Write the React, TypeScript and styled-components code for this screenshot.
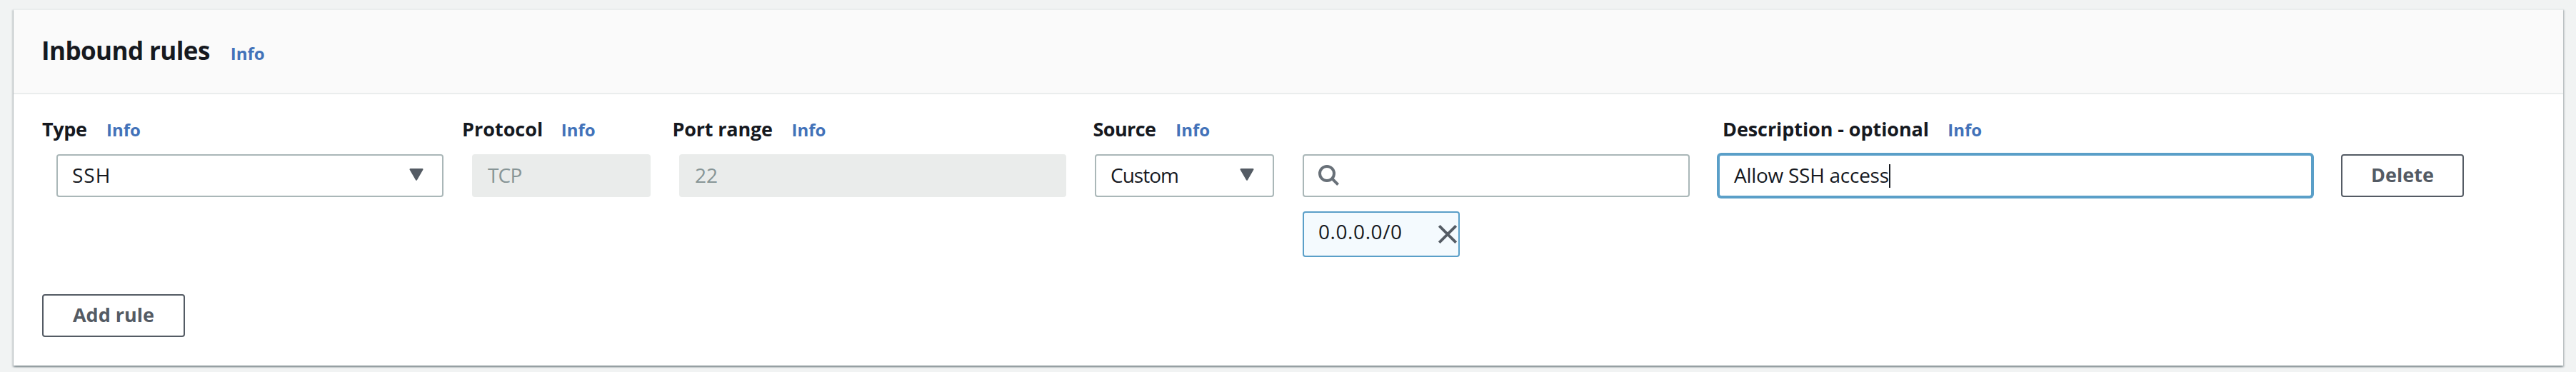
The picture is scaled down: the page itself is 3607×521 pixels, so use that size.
import React from "react";
import styled, { createGlobalStyle } from "styled-components";

const GlobalStyle = createGlobalStyle`
  * { box-sizing: border-box; }
  html, body { margin: 0; background: #f1f3f3; }
  body { font-family: "Open Sans", "Noto Sans", sans-serif; color: #16191f; overflow: hidden; }
`;

const Page = styled.main`
  height: 521px;
  padding: 12px 18px 9px 19px;
`;

const Panel = styled.section`
  height: 500px;
  background: #fff;
  border-top: 2px solid #eaeded;
  box-shadow:
    0 2px 2px rgba(0, 28, 36, 0.3),
    2px 2px 2px rgba(0, 28, 36, 0.15),
    -2px 2px 2px rgba(0, 28, 36, 0.15);
`;

const PanelHeader = styled.header`
  display: flex;
  align-items: baseline;
  gap: 29px;
  height: 118px;
  padding: 29px 39px 0;
  background: #fafafa;
  border-bottom: 2px solid #eaeded;
`;

const Title = styled.h2`
  margin: 0;
  font-size: 35px;
  line-height: 56px;
  font-weight: 700;
  letter-spacing: -0.58px;
`;

const InfoLink = styled.a`
  color: #4272b9;
  font-size: 24px;
  line-height: 36px;
  font-weight: 700;
`;

const PanelBody = styled.div`
  padding: 29px 40px 0;
`;

const LabelRow = styled.div`
  display: flex;
  height: 55px;
`;

const LabelCell = styled.div<{ $width: number; $gap: number }>`
  display: flex;
  flex: none;
  align-items: baseline;
  gap: ${(p) => p.$gap}px;
  width: ${(p) => p.$width}px;
`;

const Label = styled.span<{ $spacing: number }>`
  font-size: 27px;
  line-height: 40px;
  font-weight: 700;
  letter-spacing: ${(p) => p.$spacing}px;
  white-space: nowrap;
`;

const FieldRow = styled.div`
  display: flex;
  align-items: flex-start;
  gap: 40px;
  height: 196px;
  padding-left: 20px;
`;

const Control = styled.div<{ $width: number; $spacing?: number }>`
  display: flex;
  flex: none;
  align-items: center;
  width: ${(p) => p.$width}px;
  height: 60px;
  padding: 0 26px 0 20px;
  border: 2px solid #aab7b8;
  border-radius: 4px;
  background: #fff;
  font-size: 28px;
  line-height: 40px;
  letter-spacing: ${(p) => p.$spacing ?? 0}px;
  white-space: nowrap;
`;

const Select = styled(Control)`
  justify-content: space-between;
  padding-bottom: 3px;
`;

const DisabledInput = styled(Control)`
  padding-bottom: 2px;
  border-color: #eaeceb;
  background: #eaeceb;
  color: #879596;
`;

const FocusedInput = styled(Control)`
  padding-bottom: 2px;
  border-color: #5a9fc8;
  box-shadow: 0 0 0 2px #5a9fc8;
`;

const Caret = styled.span`
  width: 2px;
  height: 33px;
  margin-top: 3px;
  background: #16191f;
`;

const SourceSearch = styled.div`
  display: flex;
  flex-direction: column;
  flex: none;
  gap: 20px;
`;

const Token = styled.div`
  display: flex;
  align-items: center;
  justify-content: space-between;
  width: 220px;
  height: 64px;
  padding: 0 2px 0 20px;
  border: 2px solid #5a9fc8;
  border-radius: 4px;
  background: #f4fafe;
`;

const TokenText = styled.span`
  padding-bottom: 8px;
  font-size: 28px;
  line-height: 40px;
  letter-spacing: 0.58px;
`;

const Button = styled.button<{ $width: number }>`
  flex: none;
  width: ${(p) => p.$width}px;
  height: 60px;
  padding: 0 0 3px;
  border: 2px solid #545b64;
  border-radius: 4px;
  background: #fff;
  color: #545b64;
  font-family: inherit;
  font-size: 27px;
  font-weight: 700;
  line-height: 40px;
`;

const Arrow = () => (
  <svg width="20" height="17" viewBox="0 0 20 17">
    <path d="M1.6 1.2H18.4L10 15.6Z" fill="#545b64" stroke="#545b64" strokeWidth="2.2" strokeLinejoin="round" />
  </svg>
);

const SearchIcon = () => (
  <svg width="30" height="30" viewBox="0 0 30 30">
    <circle cx="12" cy="12" r="10" fill="none" stroke="#687078" strokeWidth="4" />
    <path d="M19.2 19.2L27.6 27.6" stroke="#687078" strokeWidth="4" />
  </svg>
);

const CloseIcon = () => (
  <svg width="26" height="26" viewBox="0 0 26 26">
    <path d="M1.3 1.3L24.7 24.7M24.7 1.3L1.3 24.7" stroke="#545b64" strokeWidth="3.8" />
  </svg>
);

const labels = [
  { text: "Type", width: 588, spacing: -0.4, gap: 27.5 },
  { text: "Protocol", width: 294.5, spacing: 0, gap: 25.5 },
  { text: "Port range", width: 589, spacing: -0.19, gap: 26.7 },
  { text: "Source", width: 881.5, spacing: -0.6, gap: 28 },
  { text: "Description - optional", width: 500, spacing: -0.08, gap: 26.3 },
];

export default function App() {
  return (
    <Page>
      <GlobalStyle />
      <Panel>
        <PanelHeader>
          <Title>Inbound rules</Title>
          <InfoLink>Info</InfoLink>
        </PanelHeader>
        <PanelBody>
          <LabelRow>
            {labels.map((l) => (
              <LabelCell key={l.text} $width={l.width} $gap={l.gap}>
                <Label $spacing={l.spacing}>{l.text}</Label>
                <InfoLink>Info</InfoLink>
              </LabelCell>
            ))}
          </LabelRow>
          <FieldRow>
            <Select $width={542} $spacing={1}>
              SSH
              <Arrow />
            </Select>
            <DisabledInput $width={250} $spacing={-0.8}>TCP</DisabledInput>
            <DisabledInput $width={542}>22</DisabledInput>
            <Select $width={251} $spacing={-1}>
              Custom
              <Arrow />
            </Select>
            <SourceSearch>
              <Control $width={542}>
                <SearchIcon />
              </Control>
              <Token>
                <TokenText>0.0.0.0/0</TokenText>
                <CloseIcon />
              </Token>
            </SourceSearch>
            <FocusedInput $width={832} $spacing={-0.27}>
              Allow SSH access
              <Caret />
            </FocusedInput>
            <Button $width={172}>Delete</Button>
          </FieldRow>
          <Button $width={200}>Add rule</Button>
        </PanelBody>
      </Panel>
    </Page>
  );
}
